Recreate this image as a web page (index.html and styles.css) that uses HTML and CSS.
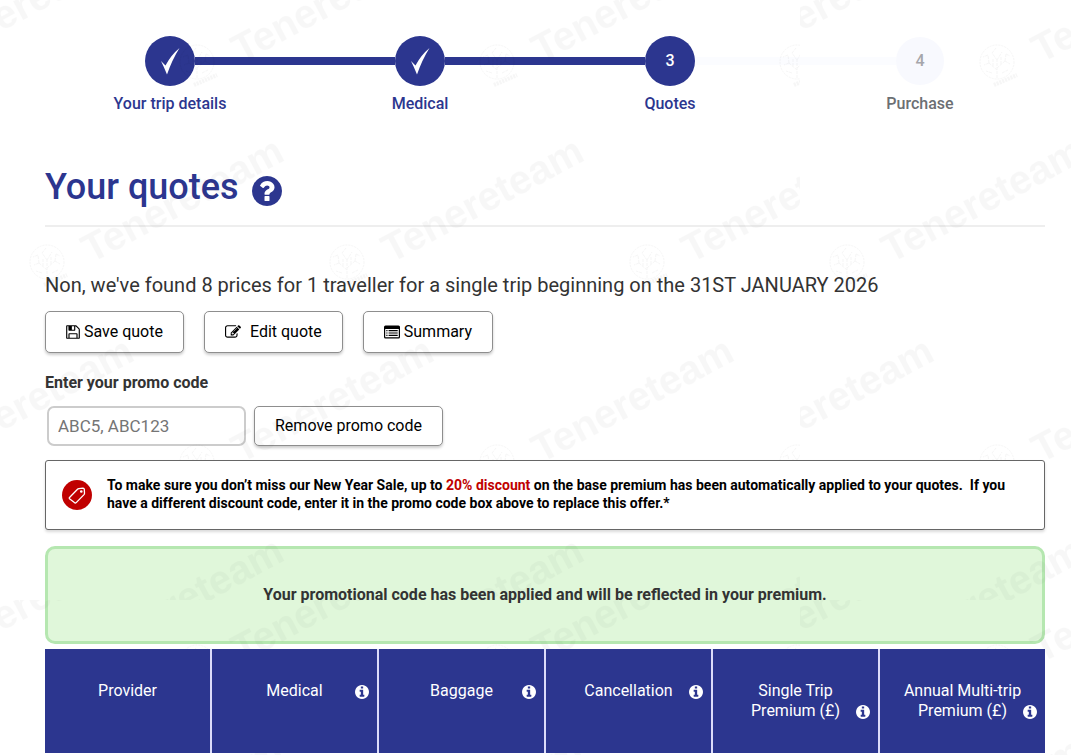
FILE: index.html
```html
<!DOCTYPE html>
<html lang="en">
<head>
    <meta charset="UTF-8">
    <meta name="viewport" content="width=device-width, initial-scale=1">
    <title>Your quotes</title>
    <link rel="stylesheet" href="styles.css">
</head>
<body>
    <!-- shared icons -->
    <svg class="sprite" aria-hidden="true">
        <symbol id="tick" viewBox="0 0 20 28">
            <path d="M1 14L5.500 18.500Q11 8 19.500 1Q12 13 7 27.500Q4 20 1 14Z"/>
        </symbol>
        <symbol id="info" viewBox="128 128 1536 1536">
            <path d="M1152 1376v-160q0-14-9-23t-23-9h-96v-512q0-14-9-23t-23-9h-320q-14 0-23 9t-9 23v160q0 14 9 23t23 9h96v320h-96q-14 0-23 9t-9 23v160q0 14 9 23t23 9h448q14 0 23-9t9-23zm-128-896v-160q0-14-9-23t-23-9h-192q-14 0-23 9t-9 23v160q0 14 9 23t23 9h192q14 0 23-9t9-23zm640 416q0 209-103 385.500t-279.500 279.500-385.500 103-385.500-103-279.500-279.500-103-385.500 103-385.500 279.500-279.500 385.500-103 385.500 103 279.500 279.500 103 385.500z"/>
        </symbol>
    </svg>

    <div class="container">
        <ol class="steps">
            <li class="step done">
                <div class="track"><span class="circle"><svg class="tick"><use href="#tick"/></svg></span></div>
                <span class="step-name">Your trip details</span>
            </li>
            <li class="step done">
                <div class="track"><span class="circle"><svg class="tick"><use href="#tick"/></svg></span></div>
                <span class="step-name">Medical</span>
            </li>
            <li class="step current">
                <div class="track"><span class="circle">3</span></div>
                <span class="step-name">Quotes</span>
            </li>
            <li class="step todo">
                <div class="track"><span class="circle">4</span></div>
                <span class="step-name">Purchase</span>
            </li>
        </ol>

        <div class="title">
            <h1>Your quotes</h1>
            <button class="icon-button help" type="button" aria-label="Help">
                <svg viewBox="128 128 1536 1536"><path d="M1024 1376v-192q0-14-9-23t-23-9h-192q-14 0-23 9t-9 23v192q0 14 9 23t23 9h192q14 0 23-9t9-23zm256-672q0-88-55.500-163t-138.500-116-170-41q-243 0-371 213-15 24 8 42l132 100q7 6 19 6 16 0 25-12 53-68 86-92 34-24 86-24 48 0 85.500 26t37.500 59q0 38-20 61t-68 45q-63 28-115.500 86.500t-52.500 125.500v36q0 14 9 23t23 9h192q14 0 23-9t9-23q0-19 21.500-49.500t54.500-49.500q32-18 49-28.500t46-35 44.500-48 28-60.500 12.500-81zm384 192q0 209-103 385.500t-279.500 279.500-385.500 103-385.500-103-279.500-279.500-103-385.500 103-385.500 279.500-279.500 385.500-103 385.500 103 279.500 279.500 103 385.500z"/></svg>
            </button>
        </div>

        <p class="summary">Non, we've found 8 prices for 1 traveller for a single trip beginning on the 31ST JANUARY 2026</p>

        <div class="actions">
            <button class="btn" type="button">
                <svg class="icon-save" viewBox="128 0 1536 1792"><path d="M512 1536h768v-384h-768v384zm896 0h128v-896q0-14-10-38.500t-20-34.500l-281-281q-10-10-34-20t-39-10v416q0 40-28 68t-68 28h-576q-40 0-68-28t-28-68v-416h-128v1280h128v-416q0-40 28-68t68-28h832q40 0 68 28t28 68v416zm-384-928v-320q0-13-9.500-22.500t-22.500-9.500h-192q-13 0-22.500 9.500t-9.500 22.500v320q0 13 9.500 22.500t22.500 9.500h192q13 0 22.500-9.500t9.500-22.500zm640 32v928q0 40-28 68t-68 28h-1344q-40 0-68-28t-28-68v-1344q0-40 28-68t68-28h928q40 0 88 20t76 48l280 280q28 28 48 76t20 88z"/></svg>
                Save quote
            </button>
            <button class="btn btn-edit" type="button">
                <svg viewBox="0 0 1792 1792"><path d="M888 1184l116-116-152-152-116 116v56h96v96h56zm440-720q-16-16-33 1l-350 350q-17 17-1 33t33-1l350-350q17-17 1-33zm80 594v190q0 119-84.500 203.500t-203.500 84.500h-832q-119 0-203.500-84.500t-84.500-203.500v-832q0-119 84.500-203.500t203.500-84.500h832q63 0 117 25 15 7 18 23 3 17-9 29l-49 49q-14 14-32 8-23-6-45-6h-832q-66 0-113 47t-47 113v832q0 66 47 113t113 47h832q66 0 113-47t47-113v-126q0-13 9-22l64-64q15-15 35-7t20 29zm-96-738l288 288-672 672h-288v-288zm444 132l-92 92-288-288 92-92q28-28 68-28t68 28l152 152q28 28 28 68t-28 68z"/></svg>
                Edit quote
            </button>
            <button class="btn" type="button">
                <svg viewBox="0 0 16 16"><path fill-rule="evenodd" d="M1.500 1.500h13A1.500 1.500 0 0 1 16 3v10a1.500 1.500 0 0 1-1.500 1.500h-13A1.500 1.500 0 0 1 0 13V3a1.500 1.500 0 0 1 1.500-1.500zM1.200 5v7.800q0 .5.500.5h12.600q.5 0 .5-.5V5zM2.300 6h1.200v1.200H2.300zM4.600 6h9.100v1.200H4.600zM2.300 8.400h1.200v1.200H2.300zM4.600 8.400h9.100v1.200H4.600zM2.300 10.800h1.200V12H2.300zM4.600 10.800h9.100V12H4.600z"/></svg>
                Summary
            </button>
        </div>

        <form class="promo">
            <label for="promo">Enter your promo code</label>
            <div class="promo-row">
                <input type="text" id="promo" placeholder="ABC5, ABC123">
                <button class="btn" type="button">Remove promo code</button>
            </div>
        </form>

        <div class="offer">
            <svg class="tag" viewBox="0 0 30 30">
                <circle cx="15" cy="15" r="15" fill="#c00000"/>
                <g fill="none" stroke="#fff" stroke-width="1.300" stroke-linejoin="round">
                    <path d="M7.500 17.500L15.500 9.200Q16 8.700 16.800 8.600L21 8.200Q22.200 8.200 22.300 9.400L22.500 13.200Q22.500 14 22 14.600L14.200 22.600Q13.300 23.500 12.400 22.600L7.500 18.800Q6.900 18.200 7.500 17.500Z"/>
                    <circle cx="19.300" cy="11.500" r="0.700"/>
                </g>
            </svg>
            <p>To make sure you don’t miss our New Year Sale, up to <span class="discount">20% discount</span> on the base premium has been automatically applied to your quotes.&nbsp; If you have a different discount code, enter it in the promo code box above to replace this offer.*</p>
        </div>

        <div class="applied">Your promotional code has been applied and will be reflected in your premium.</div>

        <table class="quotes">
            <thead>
                <tr>
                    <th><div class="head"><span>Provider</span></div></th>
                    <th><div class="head"><span>Medical</span><button class="icon-button" type="button" aria-label="About medical"><svg><use href="#info"/></svg></button></div></th>
                    <th><div class="head"><span>Baggage</span><button class="icon-button" type="button" aria-label="About baggage"><svg><use href="#info"/></svg></button></div></th>
                    <th><div class="head"><span>Cancellation</span><button class="icon-button" type="button" aria-label="About cancellation"><svg><use href="#info"/></svg></button></div></th>
                    <th><div class="head"><span>Single Trip<br>Premium (£)</span><button class="icon-button" type="button" aria-label="About single trip premium"><svg><use href="#info"/></svg></button></div></th>
                    <th><div class="head"><span>Annual Multi-trip<br>Premium (£)</span><button class="icon-button" type="button" aria-label="About annual premium"><svg><use href="#info"/></svg></button></div></th>
                </tr>
            </thead>
        </table>
    </div>

    <!-- repeating watermark -->
    <svg class="watermark" aria-hidden="true">
        <defs>
            <g id="mark">
                <g fill="none" stroke="#000" stroke-width="1">
                    <circle r="17" stroke-dasharray="2 1"/>
                    <path stroke-dasharray="3 1" d="M0 16V-2M0 8L-8 1M0 6L8-1M-8 1L-13 3M-8 1L-9-7M8-1L13 2M8-1L9-8M0-2L-5-9M0-2L5-10M-5-9L-1-14M-9-7L-14-5M9-8L13-6M-5 11L-11 9M5 11L11 8M-4 4L-4-4M4 2L4-5"/>
                    <path d="M-3 23L20 13" stroke-width="4" stroke-dasharray="2 1"/>
                </g>
                <text x="38" y="22" transform="rotate(-28)">Tenereteam</text>
            </g>
            <pattern id="marks" width="800" height="600" patternUnits="userSpaceOnUse">
                <use href="#mark" x="-103" y="62"/>
                <use href="#mark" x="197" y="62"/>
                <use href="#mark" x="497" y="62"/>
                <use href="#mark" x="797" y="62"/>
                <use href="#mark" x="47" y="262"/>
                <use href="#mark" x="347" y="262"/>
                <use href="#mark" x="647" y="262"/>
                <use href="#mark" x="-103" y="462"/>
                <use href="#mark" x="197" y="462"/>
                <use href="#mark" x="497" y="462"/>
                <use href="#mark" x="797" y="462"/>
                <use href="#mark" x="47" y="662"/>
                <use href="#mark" x="347" y="662"/>
                <use href="#mark" x="647" y="662"/>
            </pattern>
        </defs>
        <rect width="100%" height="100%" fill="url(#marks)"/>
    </svg>
</body>
</html>
```
FILE: styles.css
```css
* { box-sizing: border-box; }
body { font-family: Roboto, "Liberation Sans", sans-serif; font-size: 16px; line-height: 20px; color: #333; margin: 0; background: #fff; }
button, input { font: inherit; }
svg { display: block; fill: currentColor; }
.sprite { position: absolute; width: 0; height: 0; }
.container { padding: 36px 26px 2px 45px; }

.steps { display: flex; list-style: none; margin: 0 0 51px; padding: 0; }
.step { flex: 1; text-align: center; color: #2c368f; font-weight: 500; }
.track { display: flex; align-items: center; height: 50px; margin-bottom: 8px; }
.track::before, .track::after { content: ""; flex: 1; height: 8px; background: #2c368f; }
.step:first-child .track::before, .step:last-child .track::after { background: none; }
.current .track::after, .todo .track::before { background: #fbfcff; }
.circle { display: flex; align-items: center; justify-content: center; width: 50px; height: 50px; border-radius: 50%; background: #2c368f; color: #fff; }
.tick { width: 20px; height: 28px; }
.todo { color: #6c6f73; }
.todo .circle { width: 48px; height: 48px; background: #f8f9fe; color: #a6a6ab; }

.title { display: flex; align-items: center; gap: 13px; padding-bottom: 16px; border-bottom: 2px solid #eee; }
h1 { margin: 0; font-size: 36px; line-height: 44px; font-weight: 500; color: #2c368f; }
.icon-button { padding: 0; border: none; background: none; color: inherit; cursor: pointer; }
.icon-button svg { width: 14px; height: 14px; }
.help { padding-top: 8px; color: #2c368f; }
.help svg { width: 30px; height: 30px; }

.summary { margin: 46px 0 14px; font-size: 20px; line-height: 24px; }
.actions { display: flex; gap: 20px; }
.btn { display: flex; align-items: center; gap: 4px; height: 42px; padding: 0 20px; background: #fff; color: #000; border: 1px solid #8e8e8e; border-radius: 5px; box-shadow: 0 2px 3px rgba(0, 0, 0, 0.2); cursor: pointer; }
.btn svg { width: 16px; height: 16px; }
.btn .icon-save { width: 14px; }
.btn-edit { gap: 9px; }

.promo label { display: block; margin: 20px 0 13px; font-weight: 700; }
.promo-row { display: flex; gap: 8px; padding-left: 2px; }
.promo-row .btn { height: 40px; }
.promo input { width: 199px; height: 40px; padding: 0 9px; border: 2px solid #ccc; border-radius: 7px; background: #fff; font-size: 17px; }
.promo input::placeholder { color: #757575; }

.offer { position: relative; z-index: 1; display: flex; align-items: center; gap: 15px; margin: 14px 0 16px; padding: 15px 16px; border: 1px solid #666; border-radius: 3px; background: #fff; box-shadow: 0 2px 3px rgba(0, 0, 0, 0.15); }
.offer p { margin: 0; padding-bottom: 2px; font-size: 14px; line-height: 18px; font-weight: 700; color: #000; }
.tag { flex: none; width: 30px; height: 30px; }
.offer .discount { color: #c00000; }

.applied { padding: 36px 20px; border: 3px solid #b5e7b0; border-radius: 10px; background: #e0f7da; text-align: center; font-weight: 700; }

.quotes { position: relative; z-index: 1; width: 100%; margin-top: 5px; table-layout: fixed; border-spacing: 0; }
.quotes th { height: 104px; padding: 32px 8px 0; vertical-align: top; background: #2c368f; color: #fff; font-weight: 400; border-right: 2px solid #dcdcfa; }
.quotes th:last-child { width: 165px; border-right: none; }
.head { display: grid; grid-template-columns: 1fr auto 1fr; align-items: end; }
.head span { grid-column: 2; }
.head .icon-button { justify-self: end; padding-bottom: 2px; }

.watermark { position: absolute; top: 0; left: 0; width: 100%; height: 100%; opacity: 0.03; pointer-events: none; }
.watermark text { font: bold 40px "Liberation Sans", sans-serif; }
```
